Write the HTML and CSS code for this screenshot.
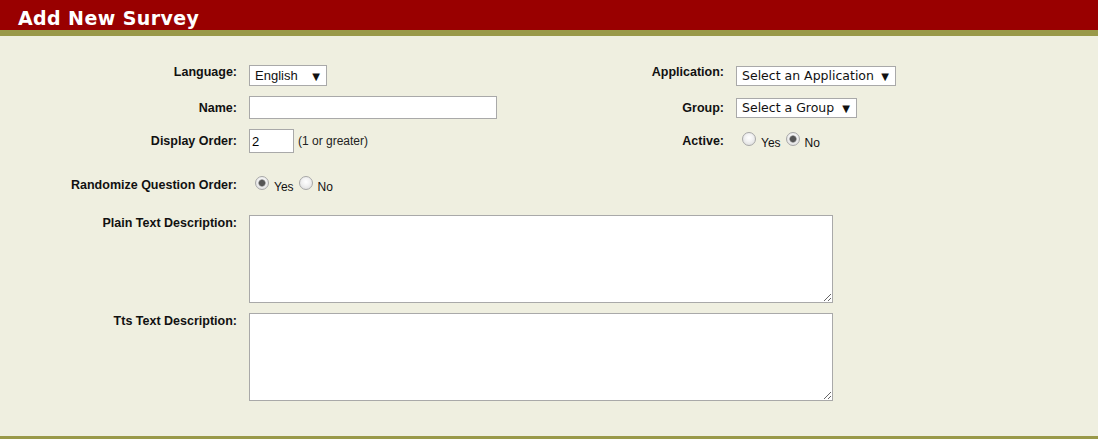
FILE: index.html
```html
<!DOCTYPE html>
<html lang="en">
<head>
    <meta charset="UTF-8">
    <title>Add New Survey</title>
    <link rel="stylesheet" href="styles.css">
</head>
<body>
    <div class="page-header">
        <h1>Add New Survey</h1>
    </div>

    <form class="survey-form">
        <!-- top part: two columns of fields -->
        <div class="top-grid">
            <label class="field-label first-label" for="language">Language:</label>
            <div class="field">
                <span class="select-wrap lang-select">
                    <select id="language"><option>English</option></select>
                </span>
            </div>
            <label class="field-label first-label" for="application">Application:</label>
            <div class="field">
                <span class="select-wrap app-select">
                    <select id="application"><option>Select an Application</option></select>
                </span>
            </div>

            <label class="field-label" for="name">Name:</label>
            <div class="field">
                <input type="text" id="name" class="name-input">
            </div>
            <label class="field-label" for="group">Group:</label>
            <div class="field">
                <span class="select-wrap group-select">
                    <select id="group"><option>Select a Group</option></select>
                </span>
            </div>

            <label class="field-label" for="displayOrder">Display Order:</label>
            <div class="field">
                <input type="text" id="displayOrder" class="order-input" value="2">
                <span class="hint">(1 or greater)</span>
            </div>
            <span class="field-label">Active:</span>
            <div class="field radios">
                <input type="radio" name="active" id="activeYes"><label for="activeYes">Yes</label>
                <input type="radio" name="active" id="activeNo" checked><label for="activeNo">No</label>
            </div>
        </div>

        <div class="row random-row">
            <span class="field-label">Randomize Question Order:</span>
            <div class="field radios">
                <input type="radio" name="randomize" id="randYes" checked><label for="randYes">Yes</label>
                <input type="radio" name="randomize" id="randNo"><label for="randNo">No</label>
            </div>
        </div>

        <div class="row text-row">
            <label class="field-label" for="plainText">Plain Text Description:</label>
            <textarea id="plainText"></textarea>
        </div>

        <div class="row text-row">
            <label class="field-label" for="ttsText">Tts Text Description:</label>
            <textarea id="ttsText"></textarea>
        </div>
    </form>

    <div class="page-footer"></div>
</body>
</html>
```

FILE: styles.css
```css
body {
    margin: 0;
    background-color: #efefe0;
    font-family: "Liberation Sans", Arial, sans-serif;
    font-size: 12px;
    color: #111;
}
.page-header {
    background-color: #990000;
    border-bottom: 6px solid #999949;
    padding: 6px 0 0 18px;
    height: 24px;
}
.page-header h1 {
    margin: 0;
    font-family: "DejaVu Sans", Verdana, sans-serif;
    font-size: 19px;
    letter-spacing: 0.4px;
    line-height: 24px;
    color: #fff;
    font-weight: bold;
}
.survey-form {
    padding: 29px 0 35px 0;
}
.top-grid {
    display: grid;
    grid-template-columns: 237px 263px 200px auto;
    column-gap: 12px;
    row-gap: 10px;
    align-items: center;
}
.field-label {
    font-weight: bold;
    font-size: 12.5px;
    text-align: right;
    line-height: 14px;
}
.first-label {
    margin-bottom: 7px;
}
.field {
    display: flex;
    align-items: center;
}
.select-wrap {
    position: relative;
    display: inline-block;
}
.select-wrap select {
    appearance: none;
    -webkit-appearance: none;
    display: block;
    background: #fff;
    border: 1px solid #a9a9a9;
    border-radius: 0;
    margin: 0;
    padding: 0 0 0 5px;
    color: #111;
    outline: none;
}
.select-wrap::after {
    content: "\25BC";
    position: absolute;
    right: 7px;
    top: 50%;
    transform: translateY(-50%);
    font-family: "DejaVu Sans", sans-serif;
    font-size: 10px;
    color: #111;
    pointer-events: none;
}
.lang-select select {
    width: 78px;
    height: 21px;
    font-family: "Liberation Sans", Arial, sans-serif;
    font-size: 13px;
}
.app-select select,
.group-select select {
    height: 20px;
    font-family: "DejaVu Sans", Verdana, sans-serif;
    font-size: 12.5px;
}
.app-select select {
    width: 160px;
}
.group-select select {
    width: 121px;
}
input[type="text"] {
    box-sizing: border-box;
    border: 1px solid #a9a9a9;
    background: #fff;
    margin: 0;
    padding: 1px 2px;
    font-family: "Liberation Sans", Arial, sans-serif;
    font-size: 13px;
    outline: none;
}
.name-input {
    width: 248px;
    height: 23px;
}
.order-input {
    width: 45px;
    height: 24px;
}
.hint {
    margin-left: 4px;
    color: #222;
}
.radios {
    align-items: flex-start;
}
.radios input[type="radio"] {
    appearance: none;
    -webkit-appearance: none;
    box-sizing: border-box;
    width: 14px;
    height: 14px;
    margin: 0 0 0 5px;
    border: 1px solid #a8a8a8;
    border-radius: 50%;
    background: radial-gradient(circle at 50% 40%, #fff 0, #f2f2f2 40%, #d8d8d8 100%);
}
.radios input[type="radio"]:first-child {
    margin-left: 6px;
}
.radios input[type="radio"]:checked {
    background: radial-gradient(circle, #555 0, #555 2.6px, #9a9a9a 3.4px, rgba(0, 0, 0, 0) 4px),
                radial-gradient(circle at 50% 40%, #fff 0, #f2f2f2 40%, #d8d8d8 100%);
}
.radios label {
    margin: 4px 0 0 5px;
    line-height: 14px;
}
.row {
    display: grid;
    grid-template-columns: 237px auto;
    column-gap: 12px;
}
.random-row {
    margin-top: 23px;
    align-items: start;
}
.random-row .field-label {
    margin-top: 2px;
}
.text-row {
    margin-top: 21px;
    align-items: start;
}
.text-row + .text-row {
    margin-top: 10px;
}
.text-row .field-label {
    margin-top: 1px;
}
.text-row textarea {
    box-sizing: border-box;
    display: block;
    width: 584px;
    height: 88px;
    margin: 0;
    border: 1px solid #a9a9a9;
    background: #fff;
    resize: both;
    outline: none;
}
.page-footer {
    border-top: 6px solid #999949;
}
```
